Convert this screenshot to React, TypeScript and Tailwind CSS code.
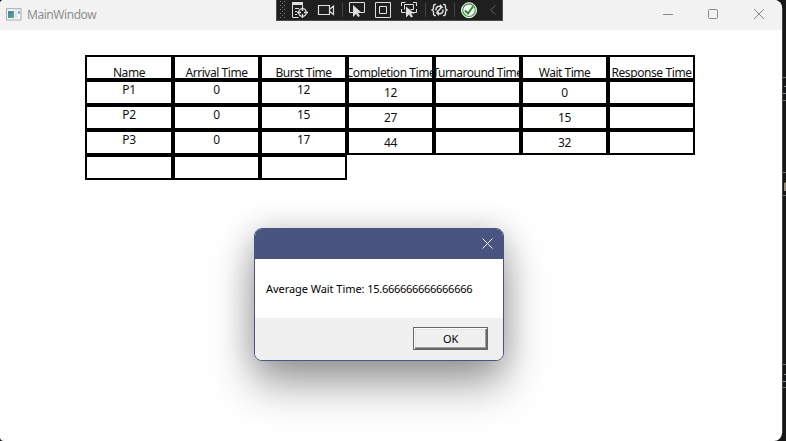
import React from 'react';

type Column = { title: string; heading: string; values: string[]; input?: boolean };

const columns: Column[] = [
  { title: 'Name', heading: 'tracking-[-0.4px]', values: ['P1', 'P2', 'P3', ''], input: true },
  { title: 'Arrival Time', heading: 'tracking-[-0.45px]', values: ['0', '0', '0', ''], input: true },
  { title: 'Burst Time', heading: 'tracking-[-0.5px]', values: ['12', '15', '17', ''], input: true },
  { title: 'Completion Time', heading: 'tracking-[-0.45px]', values: ['12', '27', '44'] },
  { title: 'Turnaround Time', heading: 'tracking-[-0.5px]', values: ['', '', ''] },
  { title: 'Wait Time', heading: 'tracking-[-0.5px]', values: ['0', '15', '32'] },
  { title: 'Response Time', heading: 'tracking-[-0.4px]', values: ['', '', ''] },
];

function Cell({ children, className }: { children: React.ReactNode; className: string }) {
  return (
    <div className={`flex h-[25px] w-full justify-center border-2 border-black text-[12px] whitespace-nowrap ${className}`}>
      {children}
    </div>
  );
}

function Schedule() {
  return (
    <div className="ml-[85px] grid w-[610px] grid-cols-[88px_repeat(6,87px)] pt-[25px]">
      {columns.map((c) => (
        <div key={c.title} className="min-w-0">
          <Cell className={`leading-[16px] ${c.heading}`}>
            <span className="-mx-3 mt-[8px] shrink-0">{c.title}</span>
          </Cell>
          {c.values.map((v, i) => (
            <Cell key={i} className={c.input ? 'tracking-[-0.3px] leading-[16px]' : 'pt-[3px] tracking-[-0.3px] leading-[16px]'}>
              {v}
            </Cell>
          ))}
        </div>
      ))}
    </div>
  );
}

function DebugToolbar() {
  return (
    <div className="absolute top-0 left-[276px] h-[21px] w-[227px] border-x border-b border-[#504c4c] bg-[#1f1f1f]">
      <svg width="225" height="20" viewBox="277 0 225 20" fill="none" stroke="#dedede" strokeWidth="1">
        <g fill="#777" stroke="none">
          {[1, 5, 9, 13, 17].map((y) => (
            <g key={y}>
              <rect x="280" y={y} width="1" height="1" />
              <rect x="284" y={y} width="1" height="1" />
              <rect x="282" y={y - 2 < 0 ? 3 : y - 2} width="1" height="1" />
            </g>
          ))}
        </g>
        <path d="M292 3.500h11" strokeWidth="3" />
        <path d="M292.500 5v12.500h6M302.500 5v2M295 8.500h4M295 11.500h2M295 14.500h2" />
        <circle cx="302.500" cy="12.500" r="3.800" strokeWidth="1.300" />
        <path d="M302.500 7v4M302.500 14v4M297 12.500h4M304 12.500h4" strokeWidth="1.300" />
        <path d="M318.500 5.500h11v9h-11zM330 9l3.500-3v8.500l-3.500-3" strokeWidth="1.200" />
        <path d="M342.500 3v14M425.500 3v14M454.500 3v14" stroke="#444" />
        <path d="M353 12.500h-3.500v-10h15v10H360" />
        <path d="M353 5v12l3-3 2 3 2-1-2-3h4z" fill="#dedede" stroke="none" />
        <path d="M375.500 2.500h15v15h-15zM379.500 6.500h7v7h-7z" />
        <path d="M401.500 6V2.500h4M413 2.500h3.500V6M416.500 9v3.500h-4M401.500 9v3.500h4M404.500 9.500v-5h9v5h-3" />
        <path d="M406 6.500v11l3-3 2 3 2-1-2-3h3.500z" fill="#dedede" stroke="none" />
        <path d="M436 4.500c-2.500-.5-2.500 1-2.500 3s-.3 2-1.300 2.500c1 .5 1.300.5 1.300 2.500s0 3.500 2.500 3M443 4.500c2.500-.5 2.500 1 2.500 3s.3 2 1.300 2.500c-1 .5-1.300.5-1.300 2.500s0 3.500-2.500 3" strokeWidth="1.400" />
        <path d="M436 10.500c-.5-3.500 2-5 5-4M443 9.500c.5 3.500-2 5-5 4M437 12l5-5" strokeWidth="1.500" />
        <path d="m440 4 3.500 3.500-3.500 1zM439 16l-3.500-3.500 3.500-1z" fill="#dedede" stroke="none" />
        <circle cx="469" cy="10.200" r="7.500" fill="#f4f4f4" stroke="#f4f4f4" />
        <circle cx="469" cy="10.200" r="6.300" stroke="#35963b" strokeWidth="1.100" />
        <path d="m465 10.500 3 3 5-7" stroke="#278d30" strokeWidth="2" />
        <path d="m495.500 5.500-5 4.500 5 4.500" stroke="#626262" />
      </svg>
    </div>
  );
}

function TitleBar() {
  return (
    <header className="flex h-[30px] items-center bg-[#f2f2f2] pl-[6px]">
      <svg className="-mt-[2px]" width="16" height="14" viewBox="0 0 16 14">
        <defs>
          <linearGradient id="app" x2="1" y2="1">
            <stop stopColor="#4b79b8" />
            <stop offset="1" stopColor="#5aad7b" />
          </linearGradient>
        </defs>
        <path d="M.5 1.500h14.500v11.500H.5z" fill="#f8f8f8" stroke="#a4aab1" />
        <path d="M1 2h13.500" stroke="#c5cbd3" />
        <path d="M2 4h6v7H2z" fill="url(#app)" />
        <path d="M9 4h2v7H9z" fill="#dedede" />
        <path d="M12 4h2v3h-2z" fill="#87b4c7" />
      </svg>
      <span className="ml-[5px] text-[12px] leading-[16px] tracking-[-0.45px] text-[#8f8f8f]">MainWindow</span>
      <svg className="-mt-[2px] mr-[17px] ml-auto" width="102" height="12" viewBox="663 8 102 12" fill="none" stroke="#898989">
        <path d="M663 14.500h10M754 9l10 10M764 9l-10 10" />
        <rect x="708.500" y="9.500" width="9" height="9" rx="1" />
      </svg>
    </header>
  );
}

function MessageBox() {
  return (
    <div
      role="dialog"
      className="absolute top-[228px] left-[254px] flex h-[133px] w-[250px] flex-col overflow-hidden rounded-[8px] border border-[#4a5481] bg-white shadow-[0_24px_44px_rgba(0,0,0,0.36),0_2px_32px_rgba(0,0,0,0.18)]"
    >
      <div className="flex h-[30px] shrink-0 items-center justify-end bg-[#4a5481] pr-[10px] pb-[2px]">
        <svg width="11" height="11" viewBox="0 0 11 11" stroke="#f4f5fa">
          <path d="m.5.5 10 10M10.500.5l-10 10" />
        </svg>
      </div>
      <div className="flex h-[59px] shrink-0 items-center pl-[11px] text-[11px] leading-[15px] whitespace-nowrap text-black">
        <span className="tracking-[-0.05px]">Average Wait Time:&nbsp;</span>
        <span className="tracking-[-0.28px]">15.666666666666666</span>
      </div>
      <div className="flex flex-1 justify-end bg-[#f0f0f0] pt-[9px] pr-[15px]">
        <button className="h-[23px] w-[75px] border border-[#646464] bg-[#f0f0f0] text-[11px] leading-[18px] tracking-[-0.3px] text-black shadow-[inset_1px_1px_#fff,inset_-1px_-1px_#696969,inset_-2px_-2px_#a0a0a0,inset_2px_2px_#e3e3e3]">
          OK
        </button>
      </div>
    </div>
  );
}

function EditorEdge() {
  return (
    <svg className="h-[441px] w-[4px] shrink-0" viewBox="782 0 4 441" stroke="#6d7377">
      <path d="M782.500 8v425" stroke="#444" />
      <path d="M783 77.500h3M783 100.500h3M783 172.500h3M783 195.500h3M783 364.500h3M783 387.500h3" />
      <path d="M784 86.500h2M783 93.500h3M784 374.500h2M783 381.500h3" stroke="#78919b" />
      <path d="M784.500 183v8" stroke="#8397a5" />
      <path d="M785.500 182v9" stroke="#a57e55" />
    </svg>
  );
}

export default function App() {
  return (
    <div className="relative flex h-[441px] w-[786px] overflow-hidden bg-[#171717] font-['Noto_Sans','Open_Sans',sans-serif] text-[#111]">
      <main className="h-[441px] w-[782px] shrink-0 overflow-hidden rounded-tl-[4px] rounded-tr-[8px] rounded-br-[8px] rounded-bl-[4px] bg-white">
        <TitleBar />
        <Schedule />
      </main>
      <EditorEdge />
      <DebugToolbar />
      <MessageBox />
    </div>
  );
}
